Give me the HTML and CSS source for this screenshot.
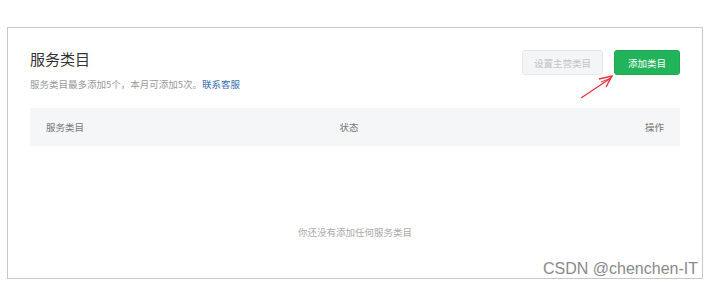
FILE: index.html
```html
<!DOCTYPE html>
<html lang="zh">
<head>
    <meta charset="UTF-8">
    <meta name="viewport" content="width=device-width, initial-scale=1.0">
    <title>服务类目</title>
    <link rel="stylesheet" href="styles.css">
</head>
<body>

    <div class="frame">
        <div class="head">
            <div class="head-text">
                <h1>服务类目</h1>
                <p class="tip">服务类目最多添加5个，本月可添加5次。<a href="#">联系客服</a></p>
            </div>
            <div class="actions">
                <button class="btn btn-disabled" disabled>设置主营类目</button>
                <button class="btn btn-primary">添加类目</button>
                <svg class="arrow" width="40" height="30" viewBox="0 0 40 30">
                    <path d="M3 26 L33 6" stroke="#e8323c" stroke-width="1.4" fill="none"/>
                    <path d="M21 7 L34 4 L28 15" stroke="#e8323c" stroke-width="1.4" fill="none"/>
                    <path d="M23 10 L33 6" stroke="#e8323c" stroke-width="1" fill="none"/>
                </svg>
            </div>
        </div>

        <div class="table-head">
            <span class="col-name">服务类目</span>
            <span class="col-state">状态</span>
            <span class="col-op">操作</span>
        </div>

        <div class="empty">你还没有添加任何服务类目</div>

        <div class="watermark">CSDN @chenchen-IT</div>
    </div>

</body>
</html>
```

FILE: styles.css
```css
body {
    margin: 0;
    padding: 27px 0 0 7px;
    background-color: #fff;
    font-family: "Noto Sans CJK SC", "Liberation Sans", sans-serif;
}
.frame {
    position: relative;
    width: 696px;
    height: 252px;
    border: 1px solid #c8c8c8;
    padding: 0 22px;
    box-sizing: border-box;
}
.head {
    display: flex;
    justify-content: space-between;
    align-items: flex-start;
    padding-top: 21px;
}
h1 {
    margin: 0;
    font-size: 15px;
    font-weight: normal;
    color: #333;
    line-height: 20px;
}
.tip {
    margin: 9px 0 0 0;
    font-size: 9.5px;
    color: #999;
    line-height: 12px;
}
.tip a {
    color: #3a6fb0;
    text-decoration: none;
}
.actions {
    position: relative;
    display: flex;
    gap: 11px;
    margin-top: 1px;
}
.btn {
    height: 25px;
    border-radius: 3px;
    font-size: 9.5px;
    font-family: inherit;
    padding: 0;
}
.btn-disabled {
    width: 81px;
    background-color: #f4f5f7;
    border: 1px solid #e6e7ea;
    color: #c2c4c8;
}
.btn-primary {
    width: 66px;
    background-color: #21b45a;
    border: 1px solid #1fa953;
    color: #fff;
}
.arrow {
    position: absolute;
    left: 56px;
    top: 22px;
}
.table-head {
    display: grid;
    grid-template-columns: 200px 206px 1fr;
    align-items: center;
    height: 38px;
    margin-top: 18px;
    padding: 0 16px;
    background-color: #f5f6f8;
    font-size: 9.5px;
    color: #777;
}
.col-state {
    text-align: center;
}
.col-op {
    text-align: right;
}
.empty {
    margin-top: 79px;
    text-align: center;
    font-size: 9.5px;
    color: #aaa;
}
.watermark {
    position: absolute;
    right: 4px;
    bottom: 0;
    font-family: "Liberation Sans", sans-serif;
    font-size: 16px;
    color: #8a8a8a;
    background-color: #fff;
}
```
